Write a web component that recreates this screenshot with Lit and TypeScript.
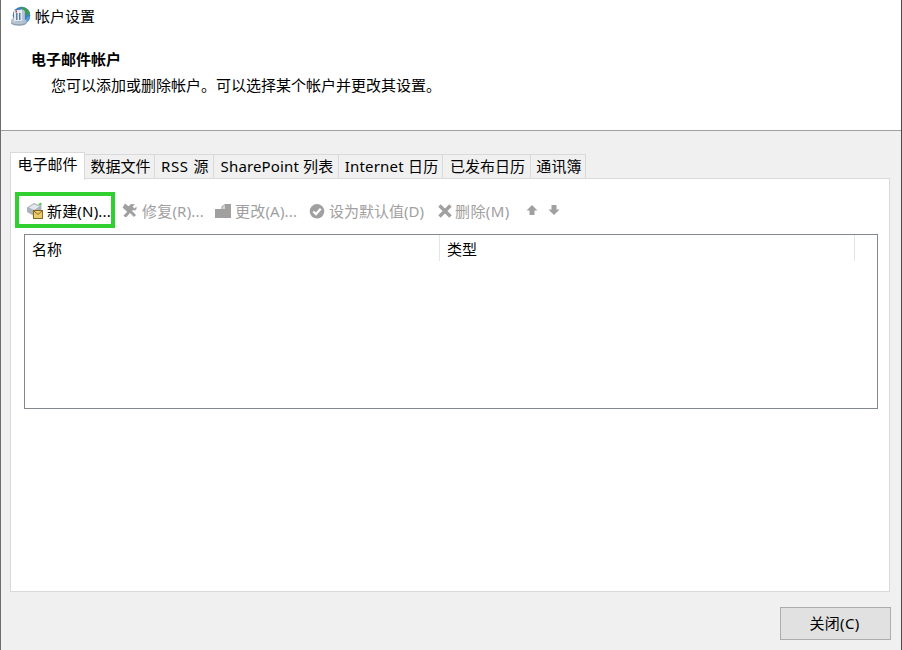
import { LitElement, html, css, svg } from "lit";
import { customElement } from "lit/decorators.js";

const tabs = [
  ["电子邮件", 75, 0],
  ["数据文件", 70, 0],
  ["RSS 源", 59, 0.7],
  ["SharePoint 列表", 125, 0.15],
  ["Internet 日历", 104, 0.2],
  ["已发布日历", 88, 0],
  ["通讯簿", 55, 0.2],
] as const;

const globe = html`<svg width="21" height="21" viewBox="0 0 21 21">
  <circle cx="11.500" cy="9.500" r="8.800" fill="#3a7fc0"/>
  <path d="M11 .8c4.500 0 8 3 9 6.500l-3 2.700-2-3-2-1-1-3z" fill="#3f9a55"/>
  <path d="M16 12l3-2 1 1c-.5 3-2 5-4 6z" fill="#4f9ed8"/>
  <path d="M4 4.500 12 3.500 14.500 5v10.500H4z" fill="#e6ebf1"/>
  <path d="M12 3.500 14.500 5v10.500H12z" fill="#b4c2d2"/>
  <path d="M6 7h1.500v7H6zM9 7h1.500v7H9z" fill="#5b7da6"/>
  <path d="M5.500 4.500h1.500v2H5.500z" fill="#d33a2c"/>
  <path d="M1 13.500 4 12v3.500h10.500V13l2 1.500v2c-2 3.500-13 3.500-15.500 0z" fill="#b8c3d1"/>
  <path d="M1 16c2 3 13 3 15.500 0v1.500c-2 3-13 3-15.500 0z" fill="#8f9eb2"/>
</svg>`;

const mail = html`<svg width="18" height="18" viewBox="0 0 18 18">
  <path d="M1 6.500 8 2l7.500 3v4l-7.500 6-7-4z" fill="#aab3bc"/>
  <path d="M2.800 6.500 8 3.200l5.500 2.200L8 9z" fill="#e4e8ec"/>
  <path d="M12 3l3.500-1.500V5z" fill="#56c152"/>
  <rect x="7.500" y="9.500" width="9" height="8" fill="#eccb6c" stroke="#84661f"/>
  <path d="M8 10l4 3.500 4-3.500" fill="none" stroke="#84661f"/>
</svg>`;

const G = "#a0a0a0";
const tools = svg`<path d="M4 1.500 7.500 4.300 10 2l4 .2-2.400 2.300 1.900 2 2-2v2.700l-1.800 1.300-1.700-.5-1 1 4 4-2 2-4-4-3.500 4H4l-1.500-1.500 3.700-3.800-4.700-4.200z" fill="${G}"/>`;
const change = svg`<path d="M0 7h6.500V4.500L10 2h6v14H0z" fill="${G}"/><path d="M7.500 7V4.800L10 3v4z" fill="#d4d4d4"/>`;
const check = svg`<circle cx="8" cy="9.300" r="7.300" fill="${G}"/><path d="M4.300 9.500 7 12.100l4.700-5.300" fill="none" stroke="#fff" stroke-width="2.200"/>`;
const cross = svg`<path d="M2.500 3.500 13.500 14.500M13.500 3.500 2.500 14.500" stroke="${G}" stroke-width="3.400" fill="none"/>`;
const up = svg`<path d="M8 3l5.500 5.500H10.500V13h-5V8.500H2.500z" fill="${G}"/>`;
const down = svg`<path d="M8 13l5.500-5.500H10.500V3h-5v4.500H2.500z" fill="${G}"/>`;

const actions = [
  { icon: tools, label: "修复(R)...", width: 94, gap: 5, ls: 0.2 },
  { icon: change, label: "更改(A)...", width: 94, gap: 4, ls: 0.2 },
  { icon: check, label: "设为默认值(D)", width: 128, gap: 4, ls: 0 },
  { icon: cross, label: "删除(M)", width: 87, gap: 2, ls: 0.4 },
  { icon: up, label: "", width: 22, gap: 0, ls: 0 },
  { icon: down, label: "", width: 22, gap: 0, ls: 0 },
];

@customElement("app-root")
export class AppRoot extends LitElement {
  static styles = css`
    :host {
      display: flex;
      flex-direction: column;
      width: 902px;
      height: 650px;
      box-sizing: border-box;
      border-left: 1px solid #6d6d6d;
      border-right: 1px solid #4a4a4a;
      background: #f0f0f0;
      font-family: "Noto Sans", "Noto Sans CJK SC", sans-serif;
      font-size: 15px;
      color: #000;
      overflow: hidden;
    }
    .head {
      height: 131px;
      flex: none;
      box-sizing: border-box;
      background: #fff;
      border-bottom: 1px solid #a0a0a0;
    }
    .title {
      display: flex;
      align-items: center;
      gap: 4px;
      height: 32px;
      padding-left: 9px;
      line-height: 18px;
    }
    h1 {
      margin: 16px 0 0 30px;
      font-size: 15px;
      font-weight: 700;
      line-height: 22px;
    }
    .sub {
      margin: 5px 0 0 50px;
      line-height: 20px;
    }
    .body {
      flex: 1;
      display: flex;
      flex-direction: column;
      padding: 21px 11px 0 9px;
      min-height: 0;
    }
    .tabs {
      display: flex;
      height: 27px;
      flex: none;
      position: relative;
      z-index: 1;
    }
    .tab {
      box-sizing: border-box;
      height: 25px;
      margin-top: 2px;
      padding-left: 2px;
      border: 1px solid #d9d9d9;
      border-left: none;
      background: #f0f0f0;
      text-align: center;
      line-height: 22px;
      white-space: nowrap;
    }
    .tab.active {
      height: 28px;
      margin-top: 0;
      padding-left: 0;
      background: #fff;
      border-left: 1px solid #d9d9d9;
      border-bottom: none;
    }
    .panel {
      height: 414px;
      flex: none;
      box-sizing: border-box;
      margin-top: -1px;
      background: #fff;
      border: 1px solid #d9d9d9;
      padding: 13px 11px 0 4px;
    }
    .toolbar {
      display: flex;
      align-items: center;
      height: 36px;
      color: #a0a0a0;
    }
    .new {
      box-sizing: border-box;
      flex: none;
      width: 100px;
      height: 36px;
      margin-right: 6px;
      border: 4px solid #2fd02f;
      display: flex;
      align-items: center;
      gap: 3px;
      padding-left: 7px;
      color: #000;
      white-space: nowrap;
      letter-spacing: 0.2px;
    }
    .item {
      display: flex;
      align-items: center;
      flex: none;
      white-space: nowrap;
    }
    .item svg { flex: none; overflow: visible; }
    .list {
      box-sizing: border-box;
      height: 175px;
      margin: 6px 0 0 9px;
      border: 1px solid #828790;
      display: flex;
      align-items: flex-start;
    }
    .col {
      box-sizing: border-box;
      height: 26px;
      line-height: 28px;
      padding-left: 7px;
      border-right: 1px solid #e5e5e5;
      width: 415px;
    }
    .foot {
      flex: 1;
      display: flex;
      justify-content: flex-end;
      align-items: flex-start;
      padding-top: 15px;
    }
    button {
      box-sizing: border-box;
      width: 111px;
      height: 33px;
      margin-right: -1px;
      background: #e1e1e1;
      border: 1px solid #adadad;
      font: inherit;
      letter-spacing: 0.3px;
      color: #000;
      padding: 0 2px 2px 0;
    }
  `;

  render() {
    return html`
      <div class="head">
        <div class="title">${globe}<span>帐户设置</span></div>
        <h1>电子邮件帐户</h1>
        <div class="sub">您可以添加或删除帐户。可以选择某个帐户并更改其设置。</div>
      </div>
      <div class="body">
        <div class="tabs">
          ${tabs.map(
            ([t, w, ls], i) =>
              html`<div class="tab ${i === 0 ? "active" : ""}" style="width:${w}px;letter-spacing:${ls}px">${t}</div>`
          )}
        </div>
        <div class="panel">
          <div class="toolbar">
            <div class="new">${mail}<span>新建(N)...</span></div>
            ${actions.map(
              (a) => html`<div class="item" style="width:${a.width}px;gap:${a.gap}px;letter-spacing:${a.ls}px">
                <svg width="16" height="16" viewBox="0 0 16 16">${a.icon}</svg>
                ${a.label ? html`<span>${a.label}</span>` : ""}
              </div>`
            )}
          </div>
          <div class="list">
            <div class="col">名称</div>
            <div class="col">类型</div>
          </div>
        </div>
        <div class="foot"><button>关闭(C)</button></div>
      </div>
    `;
  }
}
